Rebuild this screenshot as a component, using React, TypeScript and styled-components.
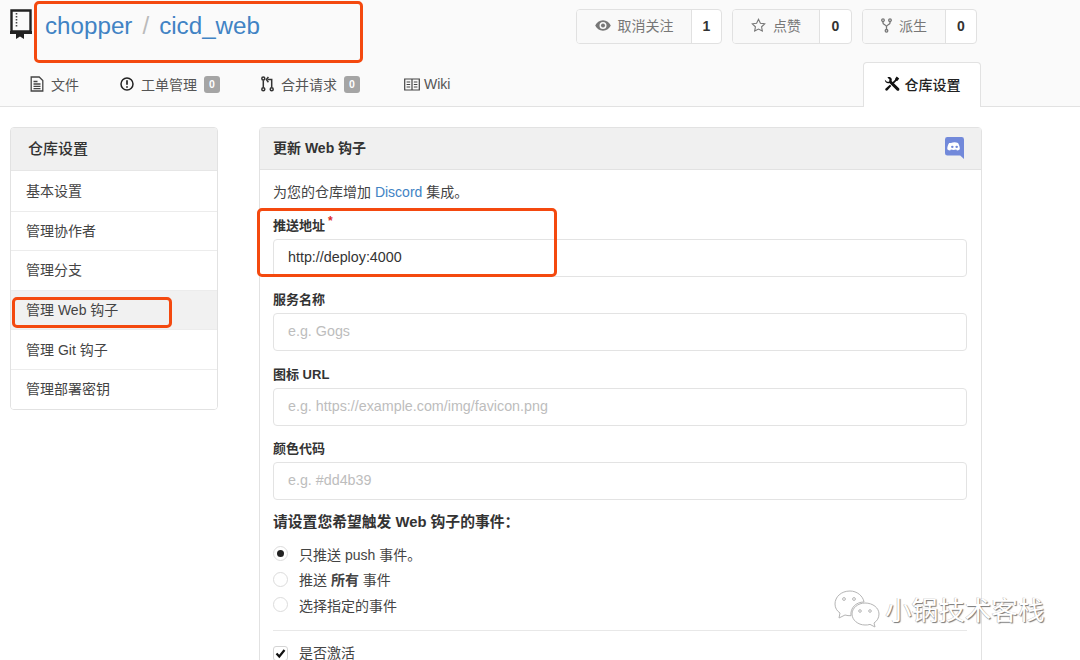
import React from 'react';
import styled, { createGlobalStyle } from 'styled-components';

const Global = createGlobalStyle`
  html, body { margin: 0; padding: 0; background: #fff; }
  * { box-sizing: border-box; }
  body {
    font-family: "Liberation Sans", "Noto Sans CJK SC", sans-serif;
    color: #333;
    font-size: 14px;
  }
`;

const Page = styled.div`
  position: relative;
  width: 1080px;
  height: 660px;
  overflow: hidden;
  background: #fff;
`;

const Header = styled.header`
  height: 107px;
  background: #fafafa;
  border-bottom: 1px solid #e2e2e2;
  display: flex;
  flex-direction: column;
`;

const TopRow = styled.div`
  display: flex;
  justify-content: space-between;
  height: 62px;
  padding: 9px 103px 0 9px;
`;

const RepoTitle = styled.div`
  display: flex;
  align-items: flex-start;
`;

const RepoName = styled.div`
  display: flex;
  gap: 10px;
  margin: 2px 0 0 12px;
  font-size: 24.2px;
  line-height: 30px;
  color: #4183c4;
`;

const Slash = styled.span`
  color: #bbb;
`;

const Actions = styled.div`
  display: flex;
  gap: 10px;
`;

const ActionGroup = styled.div`
  display: flex;
  height: 35px;
  border: 1px solid #e1e1e1;
  border-radius: 4px;
  overflow: hidden;
  background: #fff;
`;

const ActionLabel = styled.div<{ $w: number }>`
  width: ${p => p.$w}px;
  display: flex;
  align-items: center;
  justify-content: center;
  gap: 7px;
  padding-bottom: 3px;
  background: #f9f9f9;
  border-right: 1px solid #e1e1e1;
  color: #777;
  font-size: 14px;
`;

const ActionCount = styled.div<{ $w: number }>`
  width: ${p => p.$w}px;
  display: flex;
  align-items: center;
  justify-content: center;
  padding-bottom: 1px;
  font-size: 14px;
  font-weight: 700;
  color: #333;
`;

const TabRow = styled.nav`
  flex: 1;
  display: flex;
  align-items: flex-end;
  padding: 0 99px 0 30px;
`;

const Tab = styled.div<{ $w: number; $gap?: number }>`
  width: ${p => p.$w}px;
  height: 44px;
  display: flex;
  align-items: center;
  gap: ${p => p.$gap ?? 7}px;
  font-size: 14px;
  color: #555;
`;

const ActiveTab = styled.div`
  margin-left: auto;
  width: 118px;
  height: 45px;
  margin-bottom: -1px;
  display: flex;
  align-items: center;
  justify-content: center;
  gap: 5px;
  padding-bottom: 3px;
  background: #fff;
  border: 1px solid #e2e2e2;
  border-bottom: none;
  border-radius: 4px 4px 0 0;
  font-size: 14px;
  font-weight: 500;
  color: #222;
`;

const Badge = styled.span`
  display: inline-flex;
  align-items: center;
  justify-content: center;
  width: 16px;
  height: 17px;
  border-radius: 3px;
  background: #a5a5a5;
  color: #fff;
  font-size: 10.5px;
  font-weight: 700;
`;

const Content = styled.main`
  display: flex;
  align-items: flex-start;
  gap: 41px;
  padding: 20px 98px 0 10px;
`;

const SideMenu = styled.aside`
  width: 208px;
  flex: none;
  border: 1px solid #e2e2e2;
  border-radius: 4px;
  overflow: hidden;
  background: #fff;
`;

const SideHeader = styled.div`
  height: 43px;
  padding: 0 0 3px 17px;
  display: flex;
  align-items: center;
  background: #f0f0f0;
  border-bottom: 1px solid #e6e6e6;
  font-size: 15px;
  font-weight: 500;
  color: #333;
`;

const SideItem = styled.div<{ $active?: boolean }>`
  height: 39.6px;
  padding: 0 0 2px 15px;
  display: flex;
  align-items: center;
  font-size: 14px;
  color: #444;
  background: ${p => (p.$active ? '#f1f1f1' : '#fff')};
  border-top: 1px solid #ececec;
  &:nth-child(2) { border-top: none; }
`;

const Panel = styled.section`
  width: 723px;
  flex: none;
  border: 1px solid #e2e2e2;
  border-radius: 4px 4px 0 0;
`;

const PanelHeader = styled.div`
  height: 42px;
  padding: 0 17px 0 13px;
  display: flex;
  align-items: center;
  justify-content: space-between;
  background: #f0f0f0;
  border-bottom: 1px solid #e2e2e2;
  font-size: 14px;
  font-weight: 700;
  color: #333;
`;

const HeaderTitle = styled.span`
  margin-bottom: 4px;
`;

const DiscordMark = styled.svg`
  margin-bottom: 2px;
`;

const PanelBody = styled.div`
  padding: 13px 14px 0 13px;
`;

const Intro = styled.p`
  margin: 0 0 16px;
  line-height: 18px;
  font-size: 14px;
  color: #444;
`;

const Link = styled.span`
  color: #4183c4;
`;

const Field = styled.div`
  margin-bottom: 14.3px;
`;

const FieldLabel = styled.label`
  display: block;
  height: 22px;
  line-height: 18px;
  font-size: 13px;
  font-weight: 700;
  color: #333;
`;

const Required = styled.span`
  position: relative;
  top: -5px;
  margin-left: 3px;
  font-size: 12px;
  color: #db2828;
`;

const TextInput = styled.div<{ $placeholder?: boolean }>`
  height: 38px;
  padding: 0 0 2px 14px;
  display: flex;
  align-items: center;
  border: 1px solid #e3e3e3;
  border-radius: 4px;
  font-size: 14.3px;
  color: ${p => (p.$placeholder ? '#bdbdbd' : '#333')};
`;

const EventsTitle = styled.div`
  margin-top: -3px;
  height: 30px;
  line-height: 22px;
  font-size: 14.8px;
  font-weight: 700;
  color: #333;
`;

const RadioRow = styled.div`
  height: 25.5px;
  display: flex;
  align-items: center;
  gap: 11px;
  font-size: 14px;
  color: #444;
`;

const Radio = styled.span<{ $on?: boolean }>`
  width: 15px;
  height: 15px;
  border-radius: 50%;
  border: 1px solid #dcdcdc;
  background: #fff;
  display: flex;
  align-items: center;
  justify-content: center;
  &::after {
    content: '';
    width: 7px;
    height: 7px;
    border-radius: 50%;
    background: ${p => (p.$on ? '#222' : 'transparent')};
  }
`;

const Divider = styled.hr`
  margin: 12px 0 15px;
  border: none;
  border-top: 1px solid #e8e8e8;
`;

const CheckRow = styled(RadioRow)`
  height: 16px;
  align-items: flex-start;
  line-height: 15px;
`;

const CheckBox = styled.span`
  width: 15px;
  height: 15px;
  border: 1px solid #d4d4d4;
  border-radius: 3px;
  display: flex;
  align-items: center;
  justify-content: center;
`;

const Highlight = styled.div<{ $x: number; $y: number; $w: number; $h: number }>`
  position: absolute;
  left: ${p => p.$x}px;
  top: ${p => p.$y}px;
  width: ${p => p.$w}px;
  height: ${p => p.$h}px;
  border: 3px solid #f4490f;
  border-radius: 5px;
  pointer-events: none;
`;

const Watermark = styled.div`
  position: absolute;
  left: 833px;
  top: 589px;
  display: flex;
  align-items: center;
  gap: 5px;
  font-size: 26.6px;
  color: #fff;
  text-shadow: 1px 1px 1px #777, -0.5px -0.5px 0 #bbb;
`;

const menuItems = ['基本设置', '管理协作者', '管理分支', '管理 Web 钩子', '管理 Git 钩子', '管理部署密钥'];

const fields = [
  { label: '服务名称', placeholder: 'e.g. Gogs' },
  { label: '图标 URL', placeholder: 'e.g. https://example.com/img/favicon.png' },
  { label: '颜色代码', placeholder: 'e.g. #dd4b39' },
];

const RepoIcon = () => (
  <svg width="24" height="30" viewBox="0 0 24 30">
    <path d="M2.500 1.500h19v21h-19z" fill="none" stroke="#222" strokeWidth="2.400" />
    <path d="M1 22h22v3H1z" fill="#222" />
    <path d="M7.500 4v15" stroke="#444" strokeWidth="1.600" strokeDasharray="1.600 1.400" />
    <path d="M7 24h8v6l-4-2.400L7 30z" fill="#222" />
  </svg>
);

const FileIcon = () => (
  <svg width="14" height="16" viewBox="0 0 14 16" fill="none" stroke="#444" strokeWidth="1.300">
    <path d="M1.200 1h8l3.600 3.600v10.400H1.200z" />
    <path d="M3.500 5.500h4M3.500 8h7M3.500 10.300h7M3.500 12.600h7" />
  </svg>
);

const IssueIcon = () => (
  <svg width="14" height="14" viewBox="0 0 14 14" fill="none" stroke="#222" strokeWidth="1.500">
    <circle cx="7" cy="7" r="6" />
    <path d="M7 3.200v4.600M7 9.200v1.600" strokeWidth="1.700" />
  </svg>
);

const PullIcon = () => (
  <svg width="13" height="16" viewBox="0 0 13 16" fill="none" stroke="#333" strokeWidth="1.500">
    <circle cx="2.300" cy="2.600" r="1.500" />
    <circle cx="2.300" cy="13.200" r="1.500" />
    <circle cx="10.700" cy="13.200" r="1.500" />
    <path d="M2.300 4.200v7.400M10.700 11.600V3.600H6.500" />
    <path d="M7.400 1L5.400 3.600l2 2.600" />
  </svg>
);

const BookIcon = () => (
  <svg width="16" height="13" viewBox="0 0 16 13" fill="none" stroke="#444" strokeWidth="1.200">
    <path d="M.7 1h14.600v11H.7zM8 1v11" />
    <path d="M2.600 4h3.600M2.600 6.500h3.600M2.600 9h3.600M9.800 4h3.600M9.800 6.500h3.600M9.800 9h3.600" />
  </svg>
);

const EyeIcon = () => (
  <svg width="16" height="11" viewBox="0 0 16 11">
    <path
      fillRule="evenodd"
      fill="#777"
      d="M8 .3C4.400.3 1.600 2.600.2 5.500 1.600 8.400 4.400 10.700 8 10.700s6.400-2.300 7.800-5.200C14.400 2.600 11.600.3 8 .3zM8 2a3.500 3.500 0 1 1 0 7 3.500 3.500 0 0 1 0-7z"
    />
    <circle cx="8" cy="5.500" r="2" fill="#777" />
  </svg>
);

const StarIcon = () => (
  <svg width="15" height="15" viewBox="0 0 15 15" fill="none" stroke="#777" strokeWidth="1.100">
    <path d="M7.500 1.300l1.900 3.900 4.300.6-3.100 3 .7 4.300-3.800-2-3.800 2 .7-4.300-3.100-3 4.300-.6z" />
  </svg>
);

const ForkIcon = () => (
  <svg width="11" height="15" viewBox="0 0 11 15" fill="none" stroke="#777" strokeWidth="1.300">
    <circle cx="2" cy="2.200" r="1.300" />
    <circle cx="9" cy="2.200" r="1.300" />
    <circle cx="5.500" cy="12.800" r="1.300" />
    <path d="M2 3.500v1.500c0 1.500 3.500 2 3.500 3.500v3M9 3.500v1.500c0 1.500-3.500 2-3.500 3.500" />
  </svg>
);

const ToolsIcon = () => (
  <svg width="16" height="16" viewBox="0 0 16 16" fill="#111">
    <path d="M.8 3.700L3 5.800l2.100-.1.400-2.100L3.400 1.500C5 .6 7 1.200 7.600 2.800c.3.700.3 1.500 0 2.200l7.400 7.300c.6.600.5 1.500 0 2.100-.6.600-1.600.6-2.100 0L5.400 7c-2.300.8-4.500-.8-4.600-3.300z" />
    <path d="M12.700.6l2.500 2-1.600 2.200-1.300.2-2.700 2.700-1.300-1.300 2.700-2.700.2-1.300zM5.900 8.700l1.400 1.400-3.700 4.200c-.5.600-1.400.6-2 0-.5-.5-.5-1.400 0-1.900z" />
  </svg>
);

const DiscordIcon = () => (
  <DiscordMark width="19" height="22" viewBox="0 0 20 23">
    <path d="M2.500 0h15A2.500 2.500 0 0 1 20 2.500V23l-4-3.500H2.500A2.500 2.500 0 0 1 0 17V2.500A2.500 2.500 0 0 1 2.500 0z" fill="#7289da" />
    <path
      d="M6.300 6.300c2.400-1 5-1 7.400 0 1.300 2 1.900 4.100 1.900 6.500-1 .8-2 1.200-3 1.400l-.8-1.100c-1.800.5-3.800.5-5.600 0l-.8 1.100c-1-.2-2-.6-3-1.400 0-2.400.6-4.500 1.900-6.500z"
      fill="#fff"
    />
    <circle cx="7.700" cy="10.300" r="1.300" fill="#7289da" />
    <circle cx="12.300" cy="10.300" r="1.300" fill="#7289da" />
  </DiscordMark>
);

const WeChatMark = () => (
  <svg width="47" height="39" viewBox="0 0 47 39" fill="#fff" stroke="#b5b5b5" strokeWidth="1">
    <path d="M17 2C8 2 2 8 2 15c0 4 2 7 5 9l-1 5 6-3c2 .6 4 .8 6 .7C17 19 23 13 31 13 30 7 24 2 17 2z" />
    <circle cx="11" cy="10" r="1.400" />
    <circle cx="21" cy="10" r="1.400" />
    <path d="M32 14c-7 0-13 5-13 11s6 11 13 11c2 0 3 0 5-.6l5 2.600-1-4c3-2 5-5 5-9 0-6-6-11-14-11z" />
    <circle cx="27" cy="22" r="1.300" />
    <circle cx="37" cy="22" r="1.300" />
  </svg>
);

export default function App() {
  return (
    <Page>
      <Global />
      <Header>
        <TopRow>
          <RepoTitle>
            <RepoIcon />
            <RepoName>
              <span>chopper</span>
              <Slash>/</Slash>
              <span>cicd_web</span>
            </RepoName>
          </RepoTitle>
          <Actions>
            <ActionGroup>
              <ActionLabel $w={115}>
                <EyeIcon />
                取消关注
              </ActionLabel>
              <ActionCount $w={29}>1</ActionCount>
            </ActionGroup>
            <ActionGroup>
              <ActionLabel $w={87}>
                <StarIcon />
                点赞
              </ActionLabel>
              <ActionCount $w={31}>0</ActionCount>
            </ActionGroup>
            <ActionGroup>
              <ActionLabel $w={83}>
                <ForkIcon />
                派生
              </ActionLabel>
              <ActionCount $w={30}>0</ActionCount>
            </ActionGroup>
          </Actions>
        </TopRow>
        <TabRow>
          <Tab $w={90}>
            <FileIcon />
            文件
          </Tab>
          <Tab $w={141}>
            <IssueIcon />
            工单管理
            <Badge>0</Badge>
          </Tab>
          <Tab $w={143}>
            <PullIcon />
            合并请求
            <Badge>0</Badge>
          </Tab>
          <Tab $w={60} $gap={4}>
            <BookIcon />
            Wiki
          </Tab>
          <ActiveTab>
            <ToolsIcon />
            仓库设置
          </ActiveTab>
        </TabRow>
      </Header>
      <Content>
        <SideMenu>
          <SideHeader>仓库设置</SideHeader>
          {menuItems.map((item, i) => (
            <SideItem key={item} $active={i === 3}>
              {item}
            </SideItem>
          ))}
        </SideMenu>
        <Panel>
          <PanelHeader>
            <HeaderTitle>更新 Web 钩子</HeaderTitle>
            <DiscordIcon />
          </PanelHeader>
          <PanelBody>
            <Intro>
              为您的仓库增加 <Link>Discord</Link> 集成。
            </Intro>
            <Field>
              <FieldLabel>
                推送地址<Required>*</Required>
              </FieldLabel>
              <TextInput>http://deploy:4000</TextInput>
            </Field>
            {fields.map(f => (
              <Field key={f.label}>
                <FieldLabel>{f.label}</FieldLabel>
                <TextInput $placeholder>{f.placeholder}</TextInput>
              </Field>
            ))}
            <EventsTitle>请设置您希望触发 Web 钩子的事件：</EventsTitle>
            <RadioRow>
              <Radio $on />
              只推送 push 事件。
            </RadioRow>
            <RadioRow>
              <Radio />
              <span>
                推送 <b>所有</b> 事件
              </span>
            </RadioRow>
            <RadioRow>
              <Radio />
              选择指定的事件
            </RadioRow>
            <Divider />
            <CheckRow>
              <CheckBox>
                <svg width="11" height="11" viewBox="0 0 11 11">
                  <path d="M1.500 5.500l2.800 3L9.500 2" fill="none" stroke="#111" strokeWidth="2.200" />
                </svg>
              </CheckBox>
              是否激活
            </CheckRow>
          </PanelBody>
        </Panel>
      </Content>
      <Highlight $x={34} $y={1} $w={329} $h={62} />
      <Highlight $x={12} $y={297} $w={160} $h={31} />
      <Highlight $x={257} $y={208} $w={300} $h={69} />
      <Watermark>
        <WeChatMark />
        小锅技术客栈
      </Watermark>
    </Page>
  );
}
